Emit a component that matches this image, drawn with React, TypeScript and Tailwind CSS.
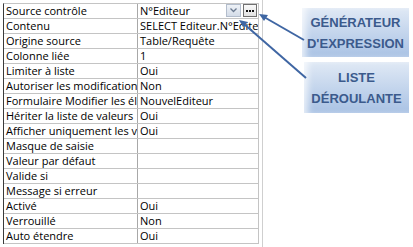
import React from "react";

const rows: { label: string; value: string }[] = [
  { label: "Source contrôle", value: "N°Editeur" },
  { label: "Contenu", value: "SELECT Editeur.N°Editeur, Editeur.Nom FROM Editeur" },
  { label: "Origine source", value: "Table/Requête" },
  { label: "Colonne liée", value: "1" },
  { label: "Limiter à liste", value: "Oui" },
  { label: "Autoriser les modifications de liste de valeurs", value: "Non" },
  { label: "Formulaire Modifier les éléments de liste", value: "NouvelEditeur" },
  { label: "Hériter la liste de valeurs", value: "Oui" },
  { label: "Afficher uniquement les valeurs de la source", value: "Oui" },
  { label: "Masque de saisie", value: "" },
  { label: "Valeur par défaut", value: "" },
  { label: "Valide si", value: "" },
  { label: "Message si erreur", value: "" },
  { label: "Activé", value: "Oui" },
  { label: "Verrouillé", value: "Non" },
  { label: "Auto étendre", value: "Oui" },
];

function Callout({ lines, className }: { lines: string[]; className: string }) {
  return (
    <div
      className={
        "flex flex-col items-center justify-center bg-linear-to-b from-[#e0e9f5] to-[#a9c2e4] shadow-[inset_6px_0_6px_-2px_rgba(255,255,255,0.7)] text-[13px] leading-[21px] font-bold text-[#3b5a8c] " +
        className
      }
      style={{ fontFamily: '"Liberation Sans", Arial, sans-serif' }}
    >
      {lines.map((l) => (
        <span key={l}>{l}</span>
      ))}
    </div>
  );
}

export default function App() {
  return (
    <div
      className="relative w-[413px] h-[247px] bg-white flex items-start overflow-hidden"
      style={{ fontFamily: '"Open Sans", "Noto Sans", sans-serif' }}
    >
      {/* property sheet */}
      <div className="ml-[3px] mt-[3px] border-l border-t border-l-[#3a3a3a] border-t-[#c4c4c4] text-[11px] text-black">
        {rows.map((r, i) => (
          <div key={i} className="flex h-[15px] border-b border-[#c4c4c4]">
            <div className="w-[134px] border-r border-[#a8a8a8] pl-[2px] overflow-hidden whitespace-nowrap leading-[14px]">
              {r.label}
            </div>
            <div className="relative w-[121px] border-r border-[#c4c4c4] pl-[2px] overflow-hidden whitespace-nowrap leading-[14px]">
              {r.value}
              {i === 0 && (
                <div className="absolute right-[1px] top-0 flex gap-[2px] bg-white pl-[1px]">
                  <div className="w-[15px] h-[13px] border border-[#b3bdcc] bg-linear-to-b from-[#eef2f7] to-[#d4dce8] flex items-center justify-center">
                    <svg width="7" height="5" viewBox="0 0 7 5">
                      <path d="M0.5 0.5 L3.5 3.5 L6.5 0.5" stroke="#6b7a90" strokeWidth="1.3" fill="none" />
                    </svg>
                  </div>
                  <div className="w-[14px] h-[13px] border border-[#707070] bg-linear-to-b from-[#fafafa] to-[#e2e2e2] flex items-center justify-center">
                    <svg width="8" height="3" viewBox="0 0 8 3">
                      <rect x="0" y="1" width="2" height="2" fill="#111" />
                      <rect x="3" y="1" width="2" height="2" fill="#111" />
                      <rect x="6" y="1" width="2" height="2" fill="#111" />
                    </svg>
                  </div>
                </div>
              )}
            </div>
          </div>
        ))}
      </div>

      {/* outer frame line */}
      <div className="ml-[3px] w-px h-full bg-[#cfcfcf]" />

      {/* callouts */}
      <div className="ml-[39px] mt-[8px] flex flex-col gap-[5px]">
        <Callout lines={["GÉNÉRATEUR", "D'EXPRESSION"]} className="w-[107px] h-[49px]" />
        <Callout lines={["LISTE", "DÉROULANTE"]} className="ml-[2px] w-[105px] h-[51px]" />
      </div>

      {/* arrows */}
      <svg className="absolute inset-0 pointer-events-none" width="413" height="247">
        <line x1="304" y1="40" x2="264" y2="17" stroke="#3f66a3" strokeWidth="2" />
        <polygon points="259,14 268,15 264,21" fill="#3f66a3" />
        <line x1="306" y1="78" x2="244" y2="24" stroke="#3f66a3" strokeWidth="2" />
        <polygon points="239,20 248,22 243,27" fill="#3f66a3" />
      </svg>
    </div>
  );
}
